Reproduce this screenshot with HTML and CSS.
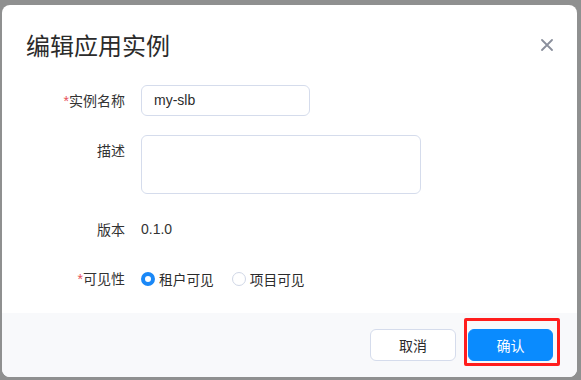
FILE: index.html
```html
<!DOCTYPE html>
<html lang="zh-CN">
<head>
<meta charset="utf-8">
<title>编辑应用实例</title>
<link rel="stylesheet" href="styles.css">
</head>
<body>
<div class="dialog">
  <div class="header">
    <h1 class="title">编辑应用实例</h1>
    <button class="close" aria-label="关闭">
      <svg width="12" height="12" viewBox="0 0 12 12"><path d="M1 1 L11 11 M11 1 L1 11" stroke="#8a8f9c" stroke-width="1.8" stroke-linecap="round"/></svg>
    </button>
  </div>
  <div class="form">
    <label class="label label-mid"><span class="req">*</span>实例名称</label>
    <div class="field"><div class="input">my-slb</div></div>

    <label class="label label-top">描述</label>
    <div class="field"><div class="textarea"></div></div>

    <label class="label label-mid">版本</label>
    <div class="field"><span class="value">0.1.0</span></div>

    <label class="label label-mid"><span class="req">*</span>可见性</label>
    <div class="field radios">
      <span class="radio"><span class="dot checked"></span>租户可见</span>
      <span class="radio"><span class="dot"></span>项目可见</span>
    </div>
  </div>
  <div class="footer">
    <button class="btn btn-default">取消</button>
    <button class="btn btn-primary">确认</button>
    <span class="highlight"></span>
  </div>
</div>
</body>
</html>
```

FILE: styles.css
```css
html, body {
  margin: 0;
  padding: 0;
}
body {
  background: #8f9090;
  width: 581px;
  height: 380px;
  overflow: hidden;
  font-family: "Liberation Sans", "Noto Sans CJK SC", sans-serif;
  color: #333;
  font-size: 14px;
}
.dialog {
  margin: 5px 0 0 2px;
  width: 575px;
  height: 372px;
  background: #fff;
  border-radius: 8px;
  overflow: hidden;
  display: flex;
  flex-direction: column;
}
.header {
  display: flex;
  justify-content: space-between;
  align-items: center;
  padding: 24px 24px 0 24px;
  height: 32px;
}
.title {
  margin: 0;
  font-size: 24px;
  font-weight: normal;
  line-height: 32px;
  color: #2b2b2b;
  font-family: "Noto Sans CJK SC", sans-serif;
}
.close {
  border: 0;
  background: none;
  padding: 0;
  width: 12px;
  height: 12px;
  display: flex;
}
.form {
  display: grid;
  grid-template-columns: 97px 1fr;
  column-gap: 16px;
  row-gap: 19px;
  padding: 24px 0 0 26px;
}
.label {
  text-align: right;
  line-height: 20px;
  font-family: "Noto Sans CJK SC", sans-serif;
  color: #333;
}
.label-mid {
  align-self: center;
}
.label-top {
  padding-top: 5px;
}
.req {
  color: #e6505a;
  font-family: "Liberation Sans", sans-serif;
}
.field {
  min-height: 31px;
  display: flex;
  align-items: center;
}
.input {
  box-sizing: border-box;
  width: 169px;
  height: 31px;
  border: 1px solid #d5dcec;
  border-radius: 6px;
  padding: 0 12px;
  line-height: 29px;
  font-size: 14px;
  color: #2b2b2b;
}
.textarea {
  box-sizing: border-box;
  width: 280px;
  height: 59px;
  border: 1px solid #d5dcec;
  border-radius: 6px;
}
.value {
  color: #333;
  font-size: 14px;
}
.radios {
  gap: 18px;
}
.radio {
  display: inline-flex;
  align-items: center;
  gap: 4px;
  font-family: "Noto Sans CJK SC", sans-serif;
  font-size: 13.7px;
  color: #2b2b2b;
}
.dot {
  box-sizing: border-box;
  width: 14px;
  height: 14px;
  border-radius: 50%;
  border: 1px solid #d0d7e6;
  background: #fff;
}
.dot.checked {
  border: 4px solid #1a88f7;
}
.footer {
  position: relative;
  margin-top: auto;
  height: 64px;
  background: #f8f9fb;
  display: flex;
  justify-content: flex-end;
  align-items: center;
  gap: 12px;
  padding-right: 24px;
}
.btn {
  height: 32px;
  border-radius: 6px;
  font-family: "Noto Sans CJK SC", sans-serif;
  font-size: 14px;
  padding: 0;
  cursor: pointer;
}
.btn-default {
  width: 86px;
  background: #fff;
  border: 1px solid #d5dcec;
  color: #2b2b2b;
}
.btn-primary {
  width: 85px;
  background: #0a8bfe;
  border: 1px solid #0a8bfe;
  color: #fff;
}
.highlight {
  position: absolute;
  left: 462px;
  top: 5px;
  width: 96px;
  height: 48px;
  box-sizing: border-box;
  border: 3px solid #ff1d1d;
  border-radius: 2px;
  pointer-events: none;
}
```
